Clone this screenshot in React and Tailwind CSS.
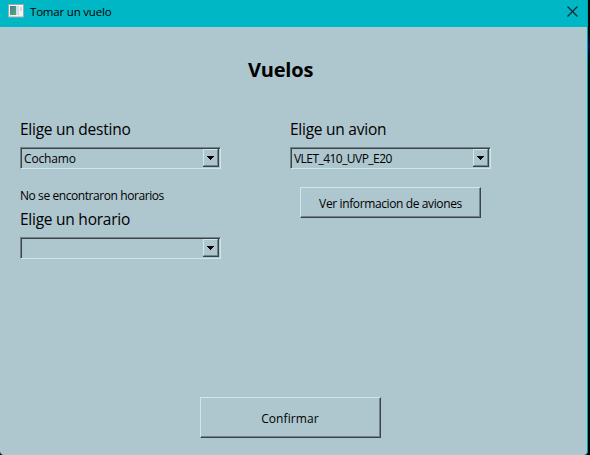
const raised =
  "flex items-center justify-center border border-t-[#cce8ef] border-l-[#cce8ef] border-r-[#3c4346] border-b-[#3c4346] shadow-[inset_-1px_-1px_0_#74848a]";
const heading = "h-[30px] text-[15.5px] leading-[24px] tracking-[-0.25px] whitespace-nowrap";

function Combo({ value, tracking = "" }) {
  return (
    <div className="flex h-[22px] w-[201px] border border-t-[#74848a] border-l-[#74848a] border-r-[#cce8ef] border-b-[#cce8ef]">
      <div className="flex min-w-0 flex-1 border-t border-l border-[#3c4346]">
        <span className={`flex-1 pl-[2px] text-[12px] leading-[20px] whitespace-nowrap ${tracking}`}>{value}</span>
        <div className="mr-px flex h-[18px] w-[16px] border-r border-b border-[#3c4346]">
          <div className="flex flex-1 items-center justify-center border border-t-[#cce8ef] border-l-[#cce8ef] border-r-[#74848a] border-b-[#74848a]">
            <svg width="7" height="4" viewBox="0 0 7 4" shapeRendering="crispEdges">
              <path d="M0 0h7v1H6v1H5v1H4v1H3V3H2V2H1V1H0z" />
            </svg>
          </div>
        </div>
      </div>
    </div>
  );
}

export default function App() {
  return (
    <div className="flex h-[455px] w-[590px] bg-gradient-to-b from-black from-5% via-[#071344] via-10% to-black to-15% font-['Open_Sans','Noto_Sans',sans-serif] text-black">
      <div className="flex w-[588px] flex-col overflow-hidden rounded-b-[4px] border-r border-[#00a5b3] bg-[#aec6ce]">
        <header className="flex h-[27px] shrink-0 items-start justify-between bg-[#00b7c6]">
          <div className="flex">
            <svg className="mt-[4px] ml-[8px]" width="16" height="14" viewBox="0 0 16 14">
              <defs>
                <linearGradient id="pane" x1="0" y1="0" x2="0.6" y2="1">
                  <stop offset="0" stopColor="#4a78b0" />
                  <stop offset="1" stopColor="#4fa768" />
                </linearGradient>
              </defs>
              <rect x="0.5" y="0.5" width="15" height="12.5" fill="#f1f3f4" stroke="#a3a9ab" />
              <rect x="2" y="2" width="6" height="9" fill="url(#pane)" />
              <rect x="8" y="2" width="3" height="9" fill="#d3dfe6" />
              <rect x="12" y="3" width="2" height="4" fill="#c7dcea" />
            </svg>
            <span className="ml-[6px] text-[11.5px] leading-[24px] tracking-[-0.2px] whitespace-nowrap">Tomar un vuelo</span>
          </div>
          <svg className="mt-[6px] mr-[9px]" width="11" height="11" viewBox="0 0 11 11">
            <path d="M.5.5l10 10M10.5.5l-10 10" stroke="#10282b" strokeWidth="1.2" />
          </svg>
        </header>
        <main className="flex flex-1 flex-col">
          <h1 className="mt-[29px] pl-[248px] text-[20px] leading-[28px] font-bold tracking-[-0.2px] whitespace-nowrap">Vuelos</h1>
          <div className="mt-[33px] flex pl-[20px]">
            <section className="flex w-[270px] flex-col">
              <h2 className={heading}>Elige un destino</h2>
              <Combo value="Cochamo" tracking="tracking-[-0.15px]" />
              <p className="mt-[17px] h-[21px] text-[12px] leading-[20px] tracking-[-0.42px] whitespace-nowrap">No se encontraron horarios</p>
              <h2 className={heading}>Elige un horario</h2>
              <Combo value="" />
            </section>
            <section className="flex flex-col">
              <h2 className={heading}>Elige un avion</h2>
              <Combo value="VLET_410_UVP_E20" tracking="tracking-[-0.55px]" />
              <button className={`mt-[18px] ml-[10px] h-[31px] w-[181px] ${raised} pt-[2px] text-[12px] tracking-[-0.38px] whitespace-nowrap`}>Ver informacion de aviones</button>
            </section>
          </div>
          <button className={`mt-auto mb-[17px] ml-[200px] h-[41px] w-[181px] ${raised} pt-[2px] pr-px text-[12px] tracking-[0.1px]`}>Confirmar</button>
        </main>
      </div>
    </div>
  );
}
